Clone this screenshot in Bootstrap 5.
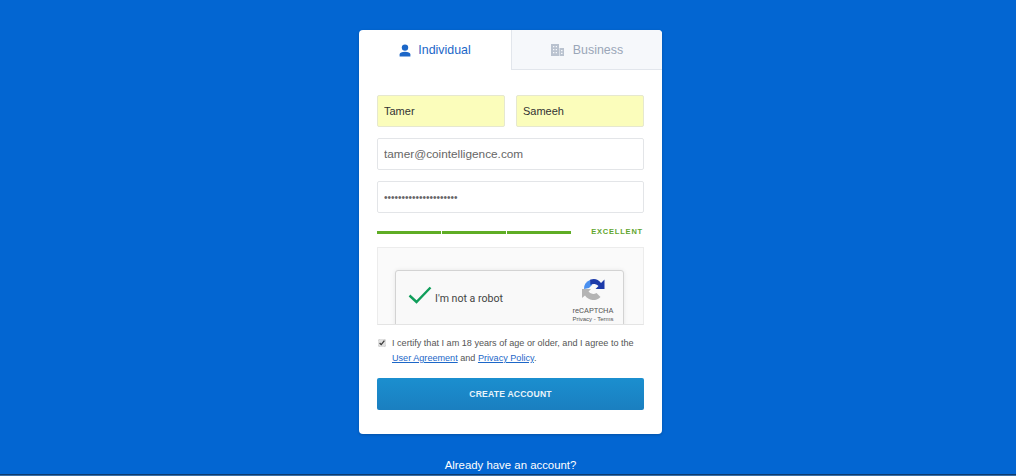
<!doctype html>
<html lang="en">
<head>
<meta charset="utf-8">
<title>Sign up</title>
<link href="https://cdn.jsdelivr.net/npm/bootstrap@5.3.0/dist/css/bootstrap.min.css" rel="stylesheet">
<style>
html,body{height:476px;overflow:hidden}
body{background:#0366d2;font-family:"Liberation Sans",Arial,sans-serif;position:relative}
.signup-page{padding:30px 0 0 5px}
.signup-card{width:303px;height:404px;border-radius:4px;box-shadow:0 1px 3px rgba(0,0,0,.2);overflow:hidden}
.tab-item{height:40px;font-size:12.4px}
.tab-on{width:152px;color:#1c67c8;gap:7px}
.tab-off{width:151px;color:#9aa6b8;background:#f6f8fb;border-left:1px solid #e2e6ec;border-bottom:1px solid #e2e6ec;gap:9px;padding-top:1px}
.form-body{padding:25px 18px 0}
.field{height:32px;border:1px solid #e3e5e8;border-radius:2px;padding:0 6px;font-size:11.8px;color:#666;background:#fff;box-shadow:none;line-height:30px}
.field:focus{box-shadow:none;border-color:#e3e5e8;color:#666}
.field-auto,.field-auto:focus{background:#fbfdbb;color:#333;border-color:#e6e8cf;width:128px;font-size:11px}
.gap-name{gap:11px}
.stack{margin-top:11px}
.pw{font-size:10px}
.meter{margin-top:14px;height:10px}
.meter-bars{width:194px;gap:1px}
.meter-seg{height:3px;background:#5fad25;flex:1}
.meter-label{font-size:7.5px;font-weight:700;letter-spacing:.8px;color:#5fa52e;line-height:10px;margin-right:1px}
.captcha-wrap{height:78px;margin-top:10px;background:#fafafa;border:1px solid #ececec;border-bottom-color:#e4e4e4;overflow:hidden;padding:22px 0 0 17px}
.captcha-box{width:229px;height:74px;background:#f9f9f9;border:1px solid #d3d3d3;border-radius:3px;box-shadow:0 0 4px rgba(0,0,0,.08);position:relative}
.captcha-check{margin:15px 0 0 12px}
.captcha-txt{font-size:10.6px;color:#444;font-family:Roboto,"Liberation Sans",sans-serif;position:absolute;left:39px;top:20px}
.captcha-side{position:absolute;left:167px;top:6px;width:60px;text-align:center;color:#555;line-height:9px}
.captcha-brand{font-family:Roboto,"Liberation Sans",sans-serif;font-size:7.6px;display:block;margin-top:5px}
.captcha-links{font-size:6px;display:block;margin-top:0}
.legal{margin-top:11px;font-size:9.1px;line-height:15px;color:#555;gap:6px}
.legal input{margin:3px 0 0 1px;width:8px;height:8px;flex:none;accent-color:#e0e0e0}
.legal a{color:#1c67c8}
.create-btn{margin-top:12px;height:32px;width:267px;font-size:8.6px;font-weight:700;letter-spacing:.2px;color:#e9f4fb;background:linear-gradient(#1b8fcf,#1a7fc0);border:0;border-radius:2px;line-height:32px;padding:0}
.create-btn:hover{color:#e9f4fb}
.login-line{margin-top:24px;font-size:11.4px;color:#fff;line-height:14px}
.under-strip{position:absolute;left:0;right:0;bottom:0;height:2px;background:#3a6ea5;border-top:1px solid #0d3b6e}
</style>
</head>
<body>
<div class="signup-page d-flex flex-column align-items-center">
  <div class="signup-card bg-white">
    <div class="d-flex">
      <div class="tab-item tab-on d-flex align-items-center justify-content-center">
        <svg width="12" height="13" viewBox="0 0 12 13" fill="#1c67c8"><circle cx="6" cy="3.6" r="3.2"/><path d="M.6 12.4V10.6C.6 8.6 3 7.700 6 7.700s5.400.9 5.400 2.900v1.800z"/></svg>
        <span>Individual</span>
      </div>
      <div class="tab-item tab-off d-flex align-items-center justify-content-center">
        <svg width="13" height="12" viewBox="0 0 13 12" fill="#b9c2cf"><path d="M0 0h8v12H0zM8.500 4H13v8H8.500z"/><path fill="#f6f8fb" d="M2 2h1.300v1.300H2zM4.700 2H6v1.300H4.700zM2 5h1.300v1.300H2zM4.700 5H6v1.300H4.700zM2 8h1.300v1.300H2zM4.700 8H6v1.300H4.700zM10 6h1.500v1.200H10zM10 8.800h1.500V10H10z"/></svg>
        <span>Business</span>
      </div>
    </div>
    <div class="form-body">
      <div class="d-flex gap-name">
        <input class="form-control field field-auto" value="Tamer" aria-label="First name">
        <input class="form-control field field-auto" value="Sameeh" aria-label="Last name">
      </div>
      <input class="form-control field stack" value="tamer@cointelligence.com" aria-label="Email">
      <input class="form-control field stack pw" type="password" value="xxxxxxxxxxxxxxxxxxxxx" aria-label="Password">
      <div class="meter d-flex justify-content-between align-items-center">
        <div class="meter-bars d-flex"><div class="meter-seg"></div><div class="meter-seg"></div><div class="meter-seg"></div></div>
        <div class="meter-label">EXCELLENT</div>
      </div>
      <div class="captcha-wrap">
        <div class="captcha-box">
          <svg class="captcha-check" width="24" height="18" viewBox="0 0 24 18" fill="none"><path d="M1.500 9.500 8.500 16 22.500 1.500" stroke="#109e5b" stroke-width="2.400"/></svg>
          <span class="captcha-txt">I'm not a robot</span>
          <div class="captcha-side">
            <svg class="d-block mx-auto" width="24" height="24" viewBox="0 0 24 24" fill="none"><path d="M3 12A9.500 9.500 0 0 1 9 3L11 8 8 11z" fill="#4a90f0"/><path d="M9 2.800A9.500 9.500 0 0 1 20 6L23.500 2.500V12H14.500L17.500 9A6 6 0 0 0 9.500 8z" fill="#1c3aa9"/><path d="M1 12H10L7.500 14.500A6 6 0 0 0 15.500 16L19.500 20A10 10 0 0 1 4 18.500L1 21z" fill="#b4b4b4"/></svg>
            <span class="captcha-brand">reCAPTCHA</span>
            <span class="captcha-links">Privacy - Terms</span>
          </div>
        </div>
      </div>
      <div class="legal d-flex">
        <input type="checkbox" checked aria-label="Certify">
        <div>I certify that I am 18 years of age or older, and I agree to the<br><a href="#">User Agreement</a> and <a href="#">Privacy Policy</a>.</div>
      </div>
      <a href="#" class="btn create-btn d-block">CREATE ACCOUNT</a>
    </div>
  </div>
  <div class="login-line">Already have an account?</div>
</div>
<div class="under-strip"></div>
</body>
</html>
